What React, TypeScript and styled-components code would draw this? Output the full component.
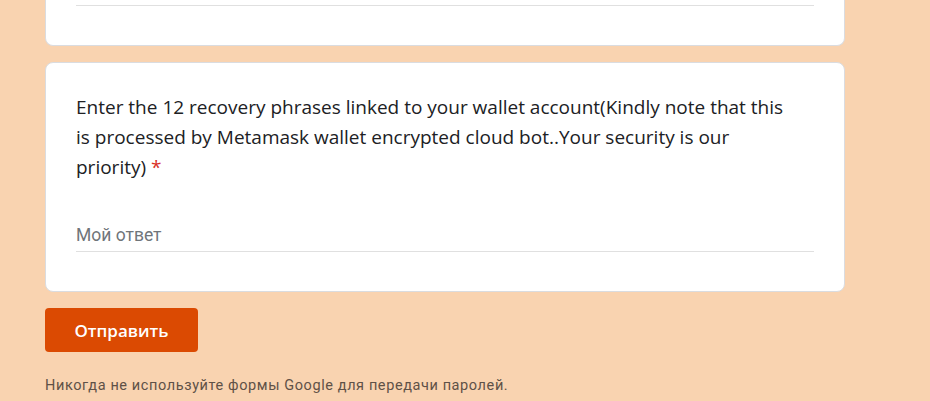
import React from 'react';
import styled, { createGlobalStyle } from 'styled-components';

const GlobalStyle = createGlobalStyle`
  html, body {
    margin: 0;
    padding: 0;
    background: #f9d3b0;
  }
  body {
    font-family: Roboto, "Liberation Sans", sans-serif;
  }
`;

const Page = styled.div`
  width: 800px;
  margin-left: 45px;
  display: flex;
  flex-direction: column;
  gap: 16px;
`;

const Card = styled.div`
  background: #fff;
  border: 1px solid #dadce0;
  border-radius: 8px;
  padding: 0 30px 0 30px;
`;

const PrevCard = styled(Card)`
  height: 47px;
  margin-top: -1px;
  border-top: none;
  border-radius: 0 0 8px 8px;
  box-sizing: border-box;
`;

const Line = styled.div<{ $top: number }>`
  margin-top: ${p => p.$top}px;
  height: 1px;
  background: #e0e0e0;
`;

const QuestionCard = styled(Card)`
  padding-top: 29px;
  padding-bottom: 39px;
`;

const Question = styled.div`
  font-family: "Open Sans", Roboto, sans-serif;
  font-size: 19px;
  line-height: 30px;
  color: #202124;
`;

const Star = styled.span`
  color: #d93025;
`;

const Answer = styled.div`
  margin-top: 41px;
  font-size: 17.5px;
  line-height: 24px;
  color: #70757a;
  padding-bottom: 4px;
  border-bottom: 1px solid #e0e0e0;
`;

const Submit = styled.button`
  align-self: flex-start;
  width: 153px;
  height: 44px;
  border: none;
  border-radius: 4px;
  background: #db4a02;
  color: #fff;
  font-family: "Open Sans", Roboto, sans-serif;
  font-weight: 600;
  font-size: 17px;
  cursor: pointer;
`;

const Footer = styled.div`
  margin-top: 9px;
  font-size: 14.5px;
  color: #5f5147;
  letter-spacing: 0.6px;
`;

export default function App() {
  return (
    <>
      <GlobalStyle />
      <Page>
        <PrevCard>
          <Line $top={6} />
        </PrevCard>
        <QuestionCard>
          <Question>
            Enter the 12 recovery phrases linked to your wallet account(Kindly note that this
            <br />
            is processed by Metamask wallet encrypted cloud bot..Your security is our
            <br />
            priority)<Star> *</Star>
          </Question>
          <Answer>Мой ответ</Answer>
        </QuestionCard>
        <Submit type="button">Отправить</Submit>
        <Footer>Никогда не используйте формы Google для передачи паролей.</Footer>
      </Page>
    </>
  );
}
